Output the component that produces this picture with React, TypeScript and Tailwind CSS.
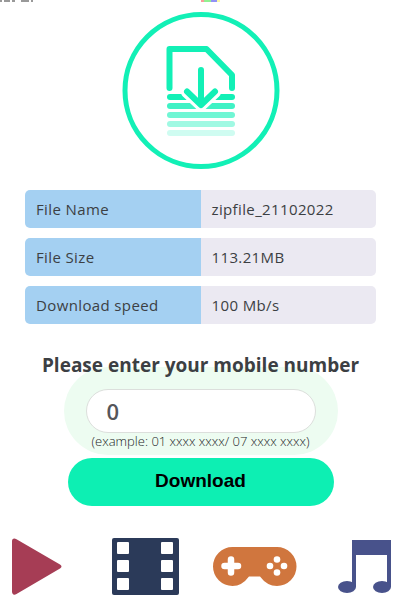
import type { ReactNode } from "react";

const details = [
  { label: "File Name", value: "zipfile_21102022" },
  { label: "File Size", value: "113.21MB" },
  { label: "Download speed", value: "100 Mb/s" },
];

function HeaderEdge() {
  return (
    <svg className="block h-3 w-full" aria-hidden="true">
      <g fill="#999999">
        <rect x="0" y="0" width="2" height="2" />
        <rect x="4" y="0" width="6" height="2" />
        <rect x="12" y="0" width="3" height="2" />
        <rect x="21" y="0" width="8" height="2" />
        <rect x="31" y="0" width="2" height="2" />
      </g>
      <rect x="201" y="0" width="3" height="2" fill="#f99c9c" />
      <rect x="204" y="0" width="7" height="2" fill="#91f091" />
      <rect x="211" y="0" width="6" height="2" fill="#9292f5" />
      <rect x="217" y="0" width="3" height="2" fill="#fbf8a8" />
    </svg>
  );
}

function DownloadBadge() {
  return (
    <svg
      className="mx-auto block size-[158px]"
      viewBox="122 12 158 158"
      fill="none"
      stroke="#12f0b6"
      strokeLinecap="round"
      strokeLinejoin="round"
      aria-hidden="true"
    >
      <circle cx="201" cy="90.500" r="76" strokeWidth="5" />
      <g strokeWidth="6">
        <path d="M170 97H232" />
        <path d="M170 106H232" stroke="#3ff2c5" />
        <path d="M170 115H232" stroke="#70f6d4" />
        <path d="M170 124H232" stroke="#a0f9e3" />
        <path d="M170 133H232" stroke="#cffcf1" />
      </g>
      <path d="M187 92L201 105L215 92" stroke="#ffffff" strokeWidth="12" />
      <g strokeWidth="6">
        <path d="M169.500 88V49H206.500L232 75V88" />
        <path d="M201 70V104M187 91.500L201 105L215 91.500" />
      </g>
    </svg>
  );
}

function Category({ label, children }: { label: string; children: ReactNode }) {
  return (
    <a href="#" aria-label={label} className="block">
      {children}
    </a>
  );
}

export default function App() {
  return (
    <main className="overflow-hidden bg-white font-['Open_Sans',sans-serif] text-[#3c3f43]">
      <HeaderEdge />
      <div className="pr-0.5">
        <DownloadBadge />

        <dl className="mx-[25px] mt-5 flex flex-col gap-[10px] text-[15px] leading-5 tracking-wide">
          {details.map((item) => (
            <div key={item.label} className="grid grid-cols-2 overflow-hidden rounded-[5px]">
              <dt className="bg-[#a4d0f2] px-[11px] py-[9px]">{item.label}</dt>
              <dd className="bg-[#ebe9f2] px-[11px] py-[9px]">{item.value}</dd>
            </div>
          ))}
        </dl>

        <form className="mt-[29px] flex flex-col items-center" onSubmit={(e) => e.preventDefault()}>
          <label htmlFor="mobile" className="z-10 text-[19px] leading-6 font-bold">
            Please enter your mobile number
          </label>
          <div className="-mt-[10px] flex h-[88px] w-[274px] flex-col items-center rounded-full bg-[#edfcf1] pt-[22px]">
            <input
              id="mobile"
              type="tel"
              defaultValue="0"
              className="h-11 w-[230px] shrink-0 rounded-full border border-[#dcdfdc] bg-white px-5 text-[22px] leading-6 font-semibold text-[#55565a] outline-none"
            />
            <p className="text-[13px] leading-4 font-light whitespace-nowrap text-[#222426]">
              (example: 01 xxxx xxxx/ 07 xxxx xxxx)
            </p>
          </div>
          <button
            type="submit"
            className="mt-[3px] h-12 w-[266px] rounded-full bg-[#0defb3] pb-0.5 font-['Liberation_Sans',Arial,sans-serif] text-[19px] leading-6 font-bold text-black"
          >
            Download
          </button>
        </form>

        <nav
          aria-label="Categories"
          className="-mr-[18px] -ml-[18px] mt-8 mb-2 grid grid-cols-4 items-center justify-items-center"
        >
          <Category label="Videos">
            <svg className="block h-[57px] w-[50px]" viewBox="0 0 50 57">
              <path d="M0 3.500C0 .5 2 0 4.500 1.200L48 26.500Q51 28.500 48 30.500L4.500 56C2 57.500 0 56.500 0 53.500Z" fill="#a63d55" />
            </svg>
          </Category>
          <Category label="Movies">
            <svg className="block h-[57px] w-[67px]" viewBox="0 0 67 57">
              <rect width="67" height="57" rx="2" fill="#2b3a59" />
              <g fill="#ffffff">
                <rect x="5" y="4" width="12" height="12" rx="1" />
                <rect x="5" y="22" width="12" height="12" rx="1" />
                <rect x="5" y="40" width="12" height="12" rx="1" />
                <rect x="49" y="4" width="12" height="12" rx="1" />
                <rect x="49" y="22" width="12" height="12" rx="1" />
                <rect x="49" y="40" width="12" height="12" rx="1" />
              </g>
            </svg>
          </Category>
          <Category label="Games">
            <svg className="block h-[39px] w-[84px]" viewBox="0 0 84 39">
              <path d="M19.500 0H64A19.500 19.500 0 0 1 64 39Q54 39 47 29.500H36Q29 39 19.500 39A19.500 19.500 0 0 1 19.500 0Z" fill="#d0763e" />
              <path d="M18 12.500V25.500M11.500 19H25" stroke="#ffffff" strokeWidth="6.500" strokeLinecap="round" />
              <g fill="#ffffff">
                <circle cx="64" cy="12.500" r="3.300" />
                <circle cx="57" cy="19" r="3.300" />
                <circle cx="71" cy="19" r="3.300" />
                <circle cx="64" cy="25.500" r="3.300" />
              </g>
            </svg>
          </Category>
          <Category label="Music">
            <svg className="block h-[53px] w-[53px]" viewBox="0 0 53 53">
              <g fill="#48528b">
                <path d="M14 0H53V47H49V15H18V47H14Z" />
                <ellipse cx="9" cy="47" rx="9" ry="6" />
                <ellipse cx="44" cy="47" rx="9" ry="6" />
              </g>
            </svg>
          </Category>
        </nav>
      </div>
    </main>
  );
}
